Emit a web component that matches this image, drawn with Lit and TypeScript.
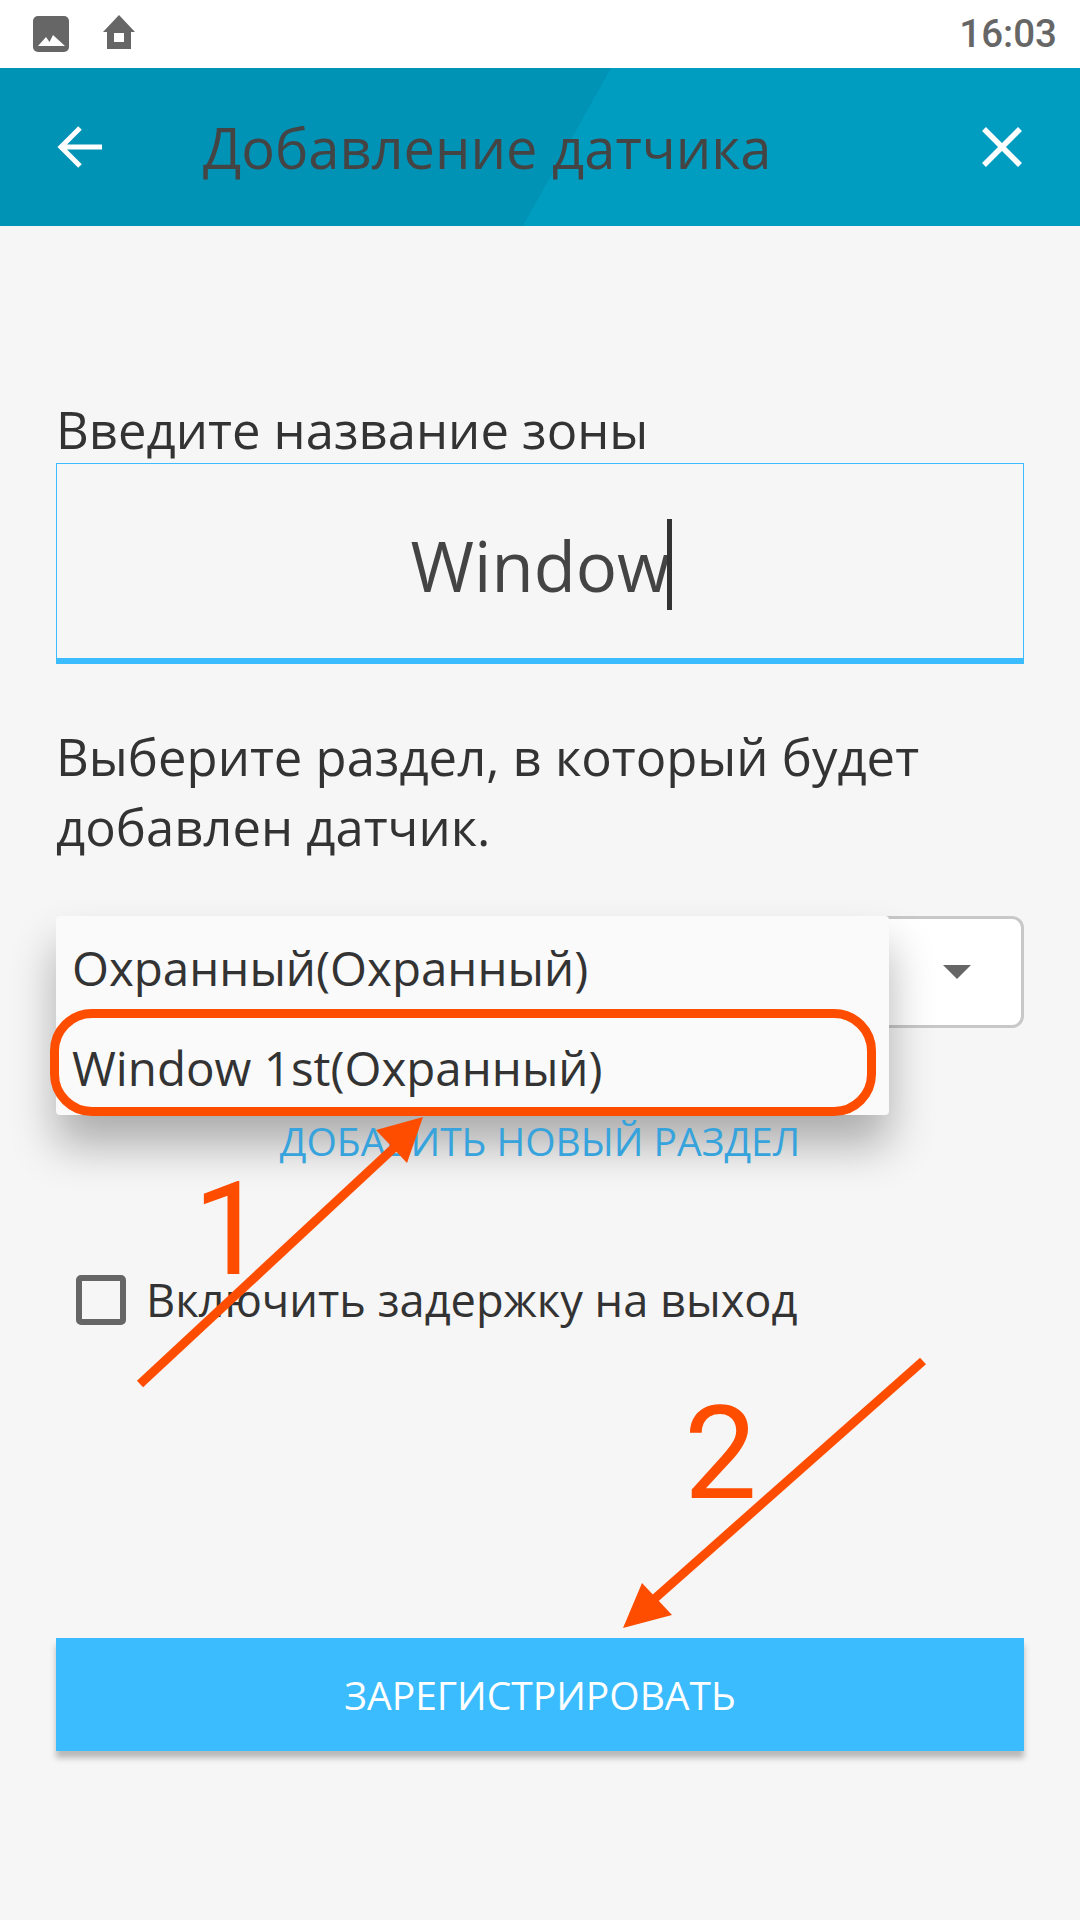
import { LitElement, html, css } from "lit";
import { customElement } from "lit/decorators.js";

@customElement("app-root")
export class AppRoot extends LitElement {
  static styles = css`
    :host { display: block; width: 1080px; height: 1920px; position: relative; overflow: hidden; background: #f6f6f6; font-family: "Open Sans", "Noto Sans", sans-serif; color: #333; }
    .status { height: 68px; background: #fff; display: flex; align-items: center; padding: 0 23px 0 33px; }
    .status svg { display: block; }
    .status .home { margin: 0 0 4px 34px; }
    .time { margin-left: auto; font: 500 38.5px/1 Roboto, sans-serif; color: #666; }
    .bar { height: 158px; display: flex; align-items: center; padding: 0 58px 0 56px;
      background: linear-gradient(119.1deg, #0093b6 533.8px, #009dc1 533.8px); }
    .bar h1 { margin: 0 0 0 101px; font-size: 56px; font-weight: 400; line-height: 1; color: #444; flex: 1; }
    .main { padding: 170px 56px 0; display: flex; flex-direction: column; }
    .label { font-size: 50.8px; line-height: 67px; }
    .input { height: 201px; box-sizing: border-box; padding: 7px 0 0 3px; border: 1px solid #3dbdff; border-bottom: 6px solid #3bbcff; display: flex; justify-content: center; align-items: center; font-size: 68.8px; color: #444; }
    .caret { width: 5px; height: 91px; background: #333; margin-left: -3px; }
    .desc { margin: 58px 0 0; font-size: 50.8px; line-height: 70px; }
    .select { position: relative; margin-top: 54px; height: 112px; box-sizing: border-box; background: #fff; border: 3px solid #c8c8c8; border-radius: 12px; display: flex; align-items: center; justify-content: flex-end; padding-right: 50px; }
    .tri { width: 28px; height: 14px; }
    .menu { position: absolute; left: -3px; top: -3px; width: 833px; height: 199px; background: #fafafa; border-radius: 4px; box-shadow: 0 30px 45px rgba(0,0,0,.3); display: flex; flex-direction: column; }
    .opt { flex: 1; display: flex; align-items: center; padding: 4px 0 0 16px; font-size: 47.5px; }
    .add { position: relative; align-self: center; margin-top: 87px; font-size: 39px; line-height: 52px; color: #36a3dc; }
    .check { display: flex; align-items: center; margin: 103px 0 0 20px; }
    .box { width: 50px; height: 50px; box-sizing: border-box; border: 6px solid #666; border-radius: 5px; }
    .check span { margin-left: 20px; font-size: 45.2px; line-height: 60px; }
    .submit { margin-top: 308px; height: 113px; background: #3bbcff; box-shadow: 0 7px 6px rgba(0,0,0,.25); display: flex; align-items: center; justify-content: center; color: #fff; font-size: 39px; }
    .notes { position: absolute; inset: 0; width: 1080px; height: 1920px; pointer-events: none; }
    .ring { position: absolute; left: 50px; top: 1009px; width: 826px; height: 107px; box-sizing: border-box; border: 9px solid #ff4d00; border-radius: 42px; }
    .num { position: absolute; font: 400 130px/1 Roboto, sans-serif; color: #ff4d00; }
    .n1 { left: 193px; top: 1165px; }
    .n2 { left: 684px; top: 1389px; }
  `;

  render() {
    return html`
      <div class="status">
        <svg width="36" height="36" viewBox="0 0 36 36"><rect width="36" height="36" rx="5" fill="#666"/><path d="M5 30 L13 21 L16.5 26 L20 19 L32 30 Z" fill="#fff"/></svg>
        <svg class="home" width="32" height="35" viewBox="0 0 32 35"><path d="M16 0 L32 17 L28 17 L28 34 L4 34 L4 17 L0 17 Z" fill="#666"/><rect x="11" y="18" width="10" height="9" fill="#fff"/></svg>
        <span class="time">16:03</span>
      </div>
      <div class="bar">
        <svg width="46" height="46" viewBox="0 0 46 46"><path d="M46 23 H6 M24 4 L5 23 L24 42" fill="none" stroke="#fff" stroke-width="5"/></svg>
        <h1>Добавление датчика</h1>
        <svg width="40" height="40" viewBox="0 0 40 40"><path d="M2 2 L38 38 M38 2 L2 38" fill="none" stroke="#fff" stroke-width="5.5"/></svg>
      </div>
      <div class="main">
        <div class="label">Введите название зоны</div>
        <div class="input">Window<i class="caret"></i></div>
        <div class="desc">Выберите раздел, в который будет<br />добавлен датчик.</div>
        <div class="select">
          <svg class="tri" viewBox="0 0 28 14"><path d="M0 0 H28 L14 14 Z" fill="#666"/></svg>
          <div class="menu">
            <div class="opt">Охранный(Охранный)</div>
            <div class="opt">Window 1st(Охранный)</div>
          </div>
        </div>
        <div class="add">ДОБАВИТЬ НОВЫЙ РАЗДЕЛ</div>
        <div class="check"><i class="box"></i><span>Включить задержку на выход</span></div>
        <div class="submit">ЗАРЕГИСТРИРОВАТЬ</div>
      </div>
      <div class="ring"></div>
      <svg class="notes" viewBox="0 0 1080 1920">
        <path d="M140 1384 L396 1146" stroke="#ff4d00" stroke-width="9" fill="none"/>
        <path d="M423 1117 L376 1130 L407 1163 Z" fill="#ff4d00"/>
        <path d="M923 1361 L652 1601" stroke="#ff4d00" stroke-width="9" fill="none"/>
        <path d="M623 1628 L642 1583 L672 1615 Z" fill="#ff4d00"/>
      </svg>
      <div class="num n1">1</div>
      <div class="num n2">2</div>
    `;
  }
}
